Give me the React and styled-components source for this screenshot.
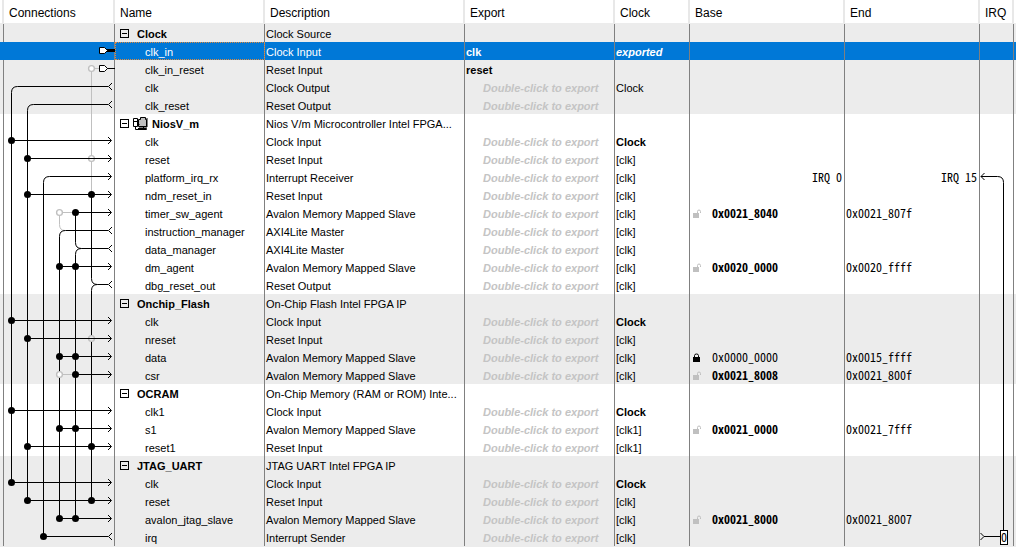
import React from 'react';
import styled, { createGlobalStyle, css } from 'styled-components';

const hint = 'Double-click to export';
const agent = 'Avalon Memory Mapped Slave';

const modules = [
  {
    name: 'Clock',
    description: 'Clock Source',
    ports: [
      { name: 'clk_in', description: 'Clock Input', exported: 'clk', clock: 'exported', clockStyle: 'italic', selected: true },
      { name: 'clk_in_reset', description: 'Reset Input', exported: 'reset' },
      { name: 'clk', description: 'Clock Output', clock: 'Clock' },
      { name: 'clk_reset', description: 'Reset Output' },
    ],
  },
  {
    name: 'NiosV_m',
    description: 'Nios V/m Microcontroller Intel FPGA...',
    cpu: true,
    ports: [
      { name: 'clk', description: 'Clock Input', clock: 'Clock', clockStyle: 'bold' },
      { name: 'reset', description: 'Reset Input', clock: '[clk]' },
      { name: 'platform_irq_rx', description: 'Interrupt Receiver', clock: '[clk]', irq: ['IRQ 0', 'IRQ 15'] },
      { name: 'ndm_reset_in', description: 'Reset Input', clock: '[clk]' },
      { name: 'timer_sw_agent', description: agent, clock: '[clk]', base: '0x0021_8040', end: '0x0021_807f' },
      { name: 'instruction_manager', description: 'AXI4Lite Master', clock: '[clk]' },
      { name: 'data_manager', description: 'AXI4Lite Master', clock: '[clk]' },
      { name: 'dm_agent', description: agent, clock: '[clk]', base: '0x0020_0000', end: '0x0020_ffff' },
      { name: 'dbg_reset_out', description: 'Reset Output', clock: '[clk]' },
    ],
  },
  {
    name: 'Onchip_Flash',
    description: 'On-Chip Flash Intel FPGA IP',
    ports: [
      { name: 'clk', description: 'Clock Input', clock: 'Clock', clockStyle: 'bold' },
      { name: 'nreset', description: 'Reset Input', clock: '[clk]' },
      { name: 'data', description: agent, clock: '[clk]', base: '0x0000_0000', end: '0x0015_ffff', locked: true },
      { name: 'csr', description: agent, clock: '[clk]', base: '0x0021_8008', end: '0x0021_800f' },
    ],
  },
  {
    name: 'OCRAM',
    description: 'On-Chip Memory (RAM or ROM) Inte...',
    ports: [
      { name: 'clk1', description: 'Clock Input', clock: 'Clock', clockStyle: 'bold' },
      { name: 's1', description: agent, clock: '[clk1]', base: '0x0021_0000', end: '0x0021_7fff' },
      { name: 'reset1', description: 'Reset Input', clock: '[clk1]' },
    ],
  },
  {
    name: 'JTAG_UART',
    description: 'JTAG UART Intel FPGA IP',
    ports: [
      { name: 'clk', description: 'Clock Input', clock: 'Clock', clockStyle: 'bold' },
      { name: 'reset', description: 'Reset Input', clock: '[clk]' },
      { name: 'avalon_jtag_slave', description: agent, clock: '[clk]', base: '0x0021_8000', end: '0x0021_8007' },
      { name: 'irq', description: 'Interrupt Sender', clock: '[clk]' },
    ],
  },
];

// centre line of a table row, in the units of the wire drawings
const at = (row) => row * 18 + 8.5;

const BUS = { clk: 7.5, rst: 23.5, irq: 39.5, inst: 55.5, data: 71.5, dbg: 87.5 };

// [row, first bus]
const inputs = [
  [6, 'clk'], [7, 'rst'], [9, 'rst'], [10, 'data'], [13, 'inst'],
  [16, 'clk'], [17, 'rst'], [18, 'inst'], [19, 'data'],
  [21, 'clk'], [22, 'inst'], [23, 'rst'],
  [25, 'clk'], [26, 'rst'], [27, 'inst'],
];

const dots = [
  ...inputs,
  [9, 'dbg'], [13, 'data'], [18, 'data'], [22, 'data'],
  [23, 'dbg'], [26, 'dbg'], [27, 'data'], [28, 'irq'],
];

const Wires = () => (
  <WireSvg width="111" height="522" viewBox="0 0 111 522">
    <g stroke="#c0c0c0">
      <path d={`M${BUS.dbg} ${at(2)}H95M${BUS.dbg} ${at(2)}V${at(9)}`} />
      <path d={`M${BUS.data} ${at(10)}H${BUS.inst}V${at(11) - 6}Q${BUS.inst} ${at(11)} 61 ${at(11)}`} />
      <path d={`M${BUS.inst} ${at(19)}H${BUS.data}`} />
    </g>
    <g stroke="#000">
      <path d={`M104 ${at(3)}H13.5Q7.5 ${at(3)} 7.5 ${at(3) + 6}V${at(25)}`} />
      <path d={`M104 ${at(4)}H29.5Q23.5 ${at(4)} 23.5 ${at(4) + 6}V${at(26)}`} />
      <path d={`M107 ${at(8)}H45.5Q39.5 ${at(8)} 39.5 ${at(8) + 6}V${at(28)}H104`} />
      <path d={`M104 ${at(11)}H61.5Q55.5 ${at(11)} 55.5 ${at(11) + 6}V${at(27)}`} />
      <path d={`M71.5 ${at(10)}V${at(12) - 6}Q71.5 ${at(12)} 77.5 ${at(12)}H104`} />
      <path d={`M77.5 ${at(12)}Q71.5 ${at(12)} 71.5 ${at(12) + 6}V${at(27)}`} />
      <path d={`M87.5 ${at(9)}V${at(14) - 6}Q87.5 ${at(14)} 93.5 ${at(14)}H104`} />
      <path d={`M93.5 ${at(14)}Q87.5 ${at(14)} 87.5 ${at(14) + 6}V${at(26)}`} />
    </g>
    <g stroke="#c0c0c0" strokeWidth="1.4">
      <circle cx={BUS.dbg} cy={at(2)} r="2.9" fill="#fff" />
      <circle cx={BUS.dbg} cy={at(7)} r="2.9" fill="#fff" />
      <circle cx={BUS.inst} cy={at(10)} r="2.9" fill="#fff" />
      <circle cx={BUS.dbg} cy={at(17)} r="2.9" fill="#ececec" />
      <circle cx={BUS.inst} cy={at(19)} r="2.9" fill="#fff" />
    </g>
    <g stroke="#000">
      {inputs.map(([row, bus]) => (
        <path key={row} d={`M${BUS[bus]} ${at(row)}H107`} />
      ))}
      {[...inputs, [8]].map(([row]) => (
        <path key={row} d={`M104 ${at(row) - 3.5}L107.5 ${at(row)}L104 ${at(row) + 3.5}`} />
      ))}
      {[3, 4, 11, 12, 14, 28].map((row) => (
        <path key={row} d={`M108 ${at(row) - 3.5}L104.5 ${at(row)}L108 ${at(row) + 3.5}`} />
      ))}
      <path d={`M103 ${at(1)}H111`} strokeWidth="3" />
      <path d={`M103 ${at(2)}H111`} />
      {[1, 2].map((row) => (
        <path key={row} fill="#fff" d={`M95.5 ${at(row) - 3}H100.5L103.5 ${at(row)}L100.5 ${at(row) + 3}H95.5Z`} />
      ))}
    </g>
    {dots.map(([row, bus]) => (
      <circle key={`${row}${bus}`} cx={BUS[bus]} cy={at(row)} r="3.5" fill="#000" />
    ))}
  </WireSvg>
);

const IrqWires = () => (
  <WireSvg width="33" height="522" viewBox="0 0 33 522" stroke="#000">
    <path d={`M1 ${at(8)}H17.5Q23.5 ${at(8)} 23.5 ${at(8) + 6}V506`} />
    <path d={`M4.5 ${at(8) - 3.5}L1 ${at(8)}L4.5 ${at(8) + 3.5}`} />
    <path d={`M0.5 ${at(28) - 3.5}L4 ${at(28)}L0.5 ${at(28) + 3.5}M4 ${at(28)}H20`} />
    <rect x="20.5" y="506.5" width="7" height="14" fill="#fff" />
    <text x="21" y="518" fill="#000" stroke="none">0</text>
  </WireSvg>
);

const CpuIcon = () => (
  <svg width="15" height="14" viewBox="0 0 15 14" stroke="#000">
    <path d="M0.5 1.5H4.5V9.5H0.5ZM0 4.5H5" fill="#fff" />
    <path d="M4.5 7.5H6.5M5.5 2.5H7.5V0.5H12.5V2.5H13.5V9.5H5.5Z" fill="#c0c0c0" />
    <path d="M14 1V10M6 10H14M10.5 10V12M2.5 10V12.5H13.5V11.5H5" fill="none" />
  </svg>
);

const Lock = ({ locked }) => (
  <svg width="10" height="9" viewBox="0 0 10 9" fill={locked ? '#000' : '#c0c0c0'}>
    <rect x="1" y="4" width={locked ? 7 : 6} height="5" />
    <path
      d={locked ? 'M2.5 4V2.5Q2.5 1 4.5 1Q6.5 1 6.5 2.5V4' : 'M5.5 4V2.5Q5.5 1 7 1Q8.5 1 8.5 2.5V4'}
      fill="none"
      stroke={locked ? '#000' : '#c0c0c0'}
    />
  </svg>
);

const ModuleRows = ({ item, first, shaded }) => (
  <>
    <Row $shaded={shaded}>
      <Cell />
      <Cell>
        {first && <Wires />}
      </Cell>
      <Cell>
        <Toggle type="button" aria-expanded="true" $icon={item.cpu}>
          <Minus />
          {item.cpu && <CpuIcon />}
          {item.name}
        </Toggle>
      </Cell>
      <Cell>{item.description}</Cell>
      <Cell />
      <Cell />
      <Cell />
      <Cell />
      <Cell>
        {first && <IrqWires />}
      </Cell>
      <Cell $plain />
    </Row>
    {item.ports.map((port) => (
      <Row key={port.name} $shaded={shaded} $selected={port.selected}>
        <Cell $plain={port.selected} />
        <Cell />
        <PortCell $focused={port.selected}>{port.name}</PortCell>
        <Cell>{port.description}</Cell>
        <Cell>{port.exported ? <Strong>{port.exported}</Strong> : <Hint>{hint}</Hint>}</Cell>
        <Cell>{port.clockStyle ? <Strong $italic={port.clockStyle === 'italic'}>{port.clock}</Strong> : port.clock}</Cell>
        <Cell>
          {port.base && (
            <Address $bold={!port.locked}>
              <Lock locked={port.locked} />
              {port.base}
            </Address>
          )}
          {port.irq && <IrqNumber>{port.irq[0]}</IrqNumber>}
        </Cell>
        <Cell>
          {port.end && <Mono>{port.end}</Mono>}
          {port.irq && <IrqNumber>{port.irq[1]}</IrqNumber>}
        </Cell>
        <Cell />
        <Cell $plain />
      </Row>
    ))}
  </>
);

const App = () => {
  return (
    <>
      <GlobalStyle />
      <Table>
        <colgroup>
          <Col $width={4} />
          <Col $width={111} />
          <Col $width={150} />
          <Col $width={200} />
          <Col $width={150} />
          <Col $width={75} />
          <Col $width={155} />
          <Col $width={135} />
          <Col $width={34} />
          <Col $width={2} />
        </colgroup>
        <thead>
          <tr>
            <HeadCell />
            <HeadCell>Connections</HeadCell>
            <HeadCell>Name</HeadCell>
            <HeadCell>Description</HeadCell>
            <HeadCell>Export</HeadCell>
            <HeadCell>Clock</HeadCell>
            <HeadCell>Base</HeadCell>
            <HeadCell>End</HeadCell>
            <HeadCell>IRQ</HeadCell>
            <HeadCell $last />
          </tr>
        </thead>
        <tbody>
          {modules.map((item, i) => (
            <ModuleRows key={item.name} item={item} first={i === 0} shaded={i % 2 === 0} />
          ))}
        </tbody>
      </Table>
    </>
  );
};

const mono = css`
  font-family: 'Noto Sans Mono CJK JP', 'Noto Sans CJK JP', 'Liberation Mono', monospace;
  font-size: 12px;
  line-height: 14px;
`;

const GlobalStyle = createGlobalStyle`
  body {
    margin: 0;
    background: #ececec;
    color: #000;
    font-family: 'Liberation Sans', Arial, sans-serif;
    font-size: 11px;
    overflow: hidden;
  }
`;

const Table = styled.table`
  width: 100%;
  table-layout: fixed;
  border-collapse: separate;
  border-spacing: 0;
`;

const Col = styled.col`
  width: ${(p) => p.$width}px;
`;

const HeadCell = styled.th`
  box-sizing: border-box;
  height: 24px;
  padding: 2px 0 0 5px;
  background: #fff;
  border-bottom: 1px solid #ececec;
  border-right: ${(p) => (p.$last ? '0' : '2px solid #e8e8e8')};
  font-size: 12px;
  font-weight: normal;
  line-height: 20px;
  text-align: left;
  white-space: nowrap;

  &:first-child,
  &:last-child {
    padding: 0;
  }
`;

const Row = styled.tr`
  background: ${(p) => (p.$selected ? '#0078d7' : p.$shaded ? '#ececec' : '#fff')};
  color: ${(p) => (p.$selected ? '#fff' : '#000')};
`;

const Cell = styled.td`
  box-sizing: border-box;
  position: relative;
  height: 18px;
  padding: 2px 0 0 1px;
  border-right: ${(p) => (p.$plain ? '0' : '1px solid #808080')};
  line-height: 16px;
  vertical-align: top;
  white-space: nowrap;

  &:first-child,
  &:last-child {
    padding: 0;
  }
`;

const PortCell = styled(Cell)`
  padding-left: 30px;
  outline: ${(p) => (p.$focused ? '1px dotted #e08a3c' : 'none')};
  outline-offset: -1px;
`;

const Toggle = styled.button`
  display: flex;
  align-items: center;
  gap: ${(p) => (p.$icon ? 4 : 8)}px;
  height: 15px;
  padding: 0 0 0 4px;
  border: 0;
  background: none;
  color: inherit;
  font: inherit;
  font-weight: bold;
`;

const Minus = styled.span`
  box-sizing: border-box;
  display: flex;
  align-items: center;
  justify-content: center;
  width: 9px;
  height: 9px;
  border: 1px solid #000;

  &::before {
    content: '';
    width: 5px;
    height: 1px;
    background: #000;
  }
`;

const Strong = styled.b`
  font-style: ${(p) => (p.$italic ? 'italic' : 'normal')};
`;

const Hint = styled.span`
  padding-left: 17px;
  color: #c4c4c4;
  font-style: italic;
  font-weight: bold;
`;

const Address = styled.div`
  ${mono}
  display: flex;
  align-items: center;
  gap: 10px;
  padding-left: 1px;
  font-weight: ${(p) => (p.$bold ? 'bold' : 'normal')};
`;

const Mono = styled.div`
  ${mono}
`;

const IrqNumber = styled.div`
  ${mono}
  padding-right: 2px;
  text-align: right;
`;

const WireSvg = styled.svg`
  ${mono}
  position: absolute;
  top: 0;
  left: 0;
  z-index: 1;
  fill: none;
`;

export default App;
